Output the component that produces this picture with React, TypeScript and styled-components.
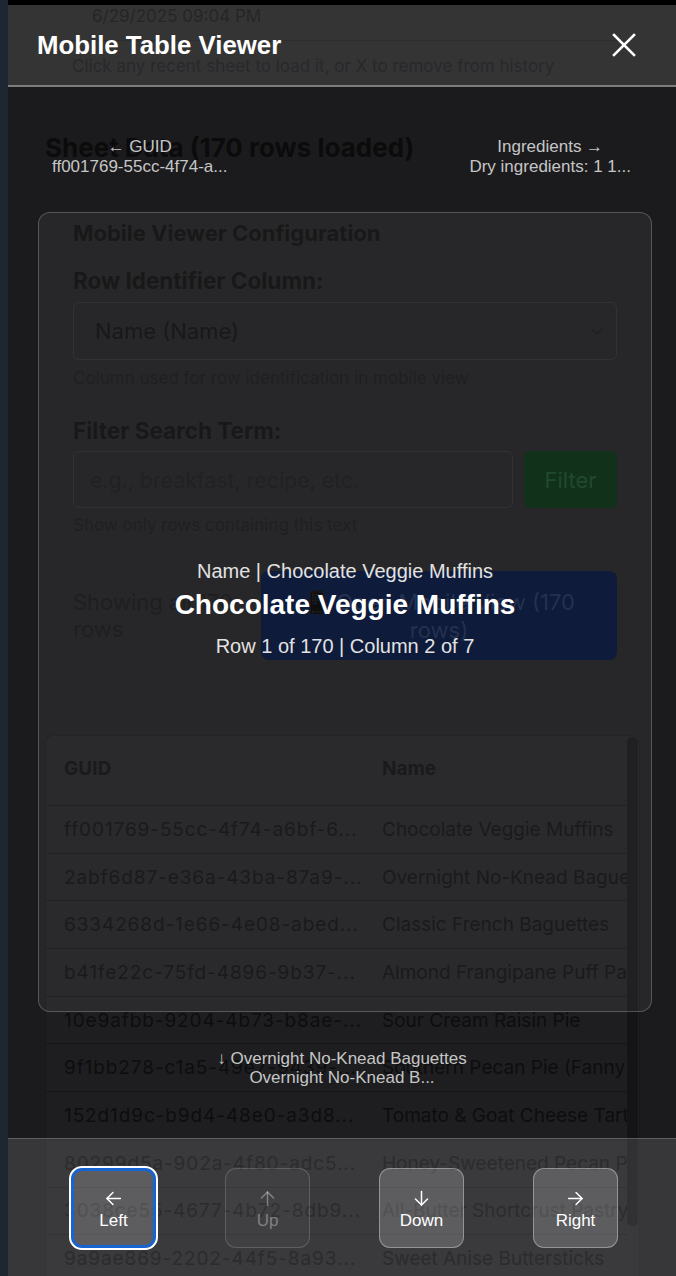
import React from 'react';
import styled, { createGlobalStyle, css } from 'styled-components';

const Global = createGlobalStyle`
  html, body { margin: 0; padding: 0; background: #1b1b1d; }
  body { width: 676px; height: 1276px; overflow: hidden; }
  * { box-sizing: border-box; }
`;

const Shell = styled.div`
  display: flex;
  width: 676px;
  height: 1276px;
  overflow: hidden;
  background: #1b1b1d;
`;

const EdgeStrip = styled.div`
  flex: none;
  width: 8px;
  background: #1e2631;
`;

const Viewport = styled.div`
  position: relative;
  flex: 1;
  overflow: hidden;
  background: #1b1b1d;
`;

/* ---------- underlying page (dimmed) ---------- */

const Page = styled.div`
  font-family: Inter, Roboto, "Liberation Sans", sans-serif;
  color: #0b0b0c;
  border-top: 5px solid #000;
`;

const RecentSection = styled.section`
  padding-left: 49px;
  padding-right: 48px;
`;

const RecentItem = styled.div`
  height: 36px;
  padding-left: 35px;
  border-bottom: 1px solid #141416;
  font-size: 17px;
  line-height: 22px;
`;

const RecentHint = styled.p`
  margin: 15px 0 0 15px;
  font-size: 17px;
  line-height: 20px;
  color: #0e0e10;
`;

const SheetTitle = styled.h2`
  margin: 55px 0 0 37px;
  font-size: 26px;
  line-height: 34px;
  font-weight: 700;
`;

const ConfigSection = styled.section`
  margin: 53px 31px 0 37px;
  padding: 0 28px;
`;

const ConfigHeading = styled.h3`
  margin: 0;
  font-size: 22px;
  line-height: 30px;
  font-weight: 700;
`;

const FieldLabel = styled.label<{ $gap: number }>`
  display: block;
  margin-top: ${(p) => p.$gap}px;
  font-size: 22.5px;
  line-height: 30px;
  font-weight: 700;
`;

const SelectBox = styled.div`
  display: flex;
  align-items: center;
  justify-content: space-between;
  height: 58px;
  margin-top: 6px;
  padding: 0 12px 0 21px;
  border: 1px solid #27272a;
  border-radius: 6px;
  font-size: 22px;
`;

const Help = styled.p<{ $gap: number }>`
  margin: ${(p) => p.$gap}px 0 0;
  font-size: 17px;
  line-height: 22px;
  color: #131315;
`;

const FilterRow = styled.div`
  display: flex;
  gap: 11px;
  margin-top: 5px;
  height: 57px;
`;

const TextInput = styled.div`
  flex: 1;
  display: flex;
  align-items: center;
  padding-left: 16px;
  border: 1px solid #27272a;
  border-radius: 6px;
  font-size: 21.3px;
  color: #151517;
`;

const FilterButton = styled.div`
  width: 93px;
  display: flex;
  align-items: center;
  justify-content: center;
  border-radius: 6px;
  background: #04260e;
  color: #134022;
  font-size: 22px;
`;

const ShowingRow = styled.div`
  display: flex;
  align-items: stretch;
  margin-top: 35px;
  height: 89px;
`;

const ShowingText = styled.div`
  flex: 1;
  padding-top: 18px;
  font-size: 22px;
  line-height: 27px;
  color: #121214;
`;

const OpenButton = styled.div`
  width: 356px;
  display: flex;
  align-items: center;
  justify-content: center;
  text-align: center;
  padding: 0 30px;
  border-radius: 8px;
  background: #000e30;
  color: #182645;
  font-size: 22px;
  line-height: 28px;
`;

const Emoji = styled.span`
  filter: brightness(0.12);
`;

const TableWrap = styled.div`
  position: relative;
  margin: 75px 36px 0 37px;
  height: 620px;
  border: 1px solid #18181a;
  border-radius: 8px;
  background: #1e1e20;
  overflow: hidden;
`;

const TableInner = styled.div`
  width: 582px;
  overflow: hidden;
`;

const Row = styled.div<{ $head?: boolean }>`
  display: grid;
  grid-template-columns: 318px 1fr;
  height: ${(p) => (p.$head ? 70 : 47.7)}px;
  padding-bottom: ${(p) => (p.$head ? 4 : 0)}px;
  align-items: center;
  border-bottom: 1px solid #161618;
  font-size: 19px;
  font-weight: ${(p) => (p.$head ? 700 : 400)};
  color: #0d0d0f;
`;

const Cell = styled.div<{ $id?: boolean }>`
  padding: 0 0 0 18px;
  white-space: nowrap;
  overflow: hidden;
  letter-spacing: ${(p) => (p.$id ? '0.9px' : 'normal')};
`;

const ScrollThumb = styled.div`
  position: absolute;
  top: 1px;
  right: 1px;
  width: 11px;
  height: 489px;
  border-radius: 6px;
  background: #141416;
`;

/* ---------- overlay viewer ---------- */

const Overlay = styled.div`
  position: absolute;
  inset: 0;
  display: flex;
  flex-direction: column;
  font-family: "Liberation Sans", Arial, sans-serif;
  color: #fff;
`;

const Header = styled.header`
  flex: none;
  margin-top: 5px;
  height: 82px;
  display: flex;
  align-items: center;
  justify-content: space-between;
  padding: 0 40px 0 29px;
  background: rgba(255, 255, 255, 0.11);
  border-bottom: 2px solid rgba(255, 255, 255, 0.36);
`;

const Title = styled.h1`
  margin: 0;
  font-size: 25.8px;
  font-weight: 700;
`;

const CloseButton = styled.button`
  border: 0;
  padding: 0;
  background: none;
  display: flex;
  color: #fff;
`;

const Hints = styled.div`
  flex: none;
  height: 125px;
  display: flex;
  align-items: flex-start;
  justify-content: space-between;
  padding: 50px 45px 0 44px;
`;

const Hint = styled.div`
  text-align: center;
  font-size: 17px;
  line-height: 19.5px;
  color: #c6c6c6;
`;

const Card = styled.div`
  flex: none;
  height: 800px;
  margin: 0 24px 0 30px;
  display: flex;
  flex-direction: column;
  align-items: center;
  justify-content: center;
  padding-bottom: 7px;
  border: 1px solid rgba(255, 255, 255, 0.22);
  border-radius: 12px;
  background: rgba(255, 255, 255, 0.055);
  text-align: center;
`;

const CellPath = styled.div`
  font-size: 20px;
  line-height: 24px;
  color: #e2e2e2;
`;

const CellValue = styled.div`
  margin-top: 5px;
  font-size: 28px;
  line-height: 34px;
  font-weight: 700;
  color: #fff;
`;

const CellPos = styled.div`
  margin-top: 12px;
  font-size: 20px;
  line-height: 24px;
  color: #e2e2e2;
`;

const BelowHint = styled.div`
  flex: none;
  height: 126px;
  display: flex;
  align-items: center;
  justify-content: center;
  padding-bottom: 14px;
`;

const NavBar = styled.nav`
  flex: none;
  height: 138px;
  display: flex;
  gap: 69px;
  padding: 29px 0 0 63px;
  background: rgba(255, 255, 255, 0.125);
  border-top: 1px solid rgba(255, 255, 255, 0.2);
`;

const NavButton = styled.button<{ $active?: boolean; $disabled?: boolean }>`
  width: 85px;
  height: 80px;
  display: flex;
  flex-direction: column;
  align-items: center;
  justify-content: center;
  gap: 4px;
  padding: 4px 0 0;
  border-radius: 11px;
  border: 1px solid rgba(255, 255, 255, 0.34);
  background: rgba(255, 255, 255, 0.18);
  color: #fff;
  font-family: "Liberation Sans", Arial, sans-serif;
  font-size: 17px;
  line-height: 20px;
  ${(p) =>
    p.$active &&
    css`
      border: 3px solid #1764d4;
      outline: 2px solid #fff;
      outline-offset: 0;
    `}
  ${(p) =>
    p.$disabled &&
    css`
      background: rgba(255, 255, 255, 0.03);
      border-color: rgba(255, 255, 255, 0.16);
      color: rgba(255, 255, 255, 0.35);
    `}
`;

type Dir = 'left' | 'up' | 'down' | 'right';
const rot: Record<Dir, number> = { left: 0, up: 90, right: 180, down: 270 };

const ArrowIcon = ({ dir }: { dir: Dir }) => (
  <svg
    width="17"
    height="17"
    viewBox="0 0 16 16"
    fill="none"
    stroke="currentColor"
    strokeWidth="1.4"
    strokeLinecap="round"
    strokeLinejoin="round"
    style={{ transform: `rotate(${rot[dir]}deg)` }}
  >
    <path d="M14.5 8H1.8" />
    <path d="M7.5 2.3 1.8 8l5.7 5.7" />
  </svg>
);

const rows: [string, string][] = [
  ['ff001769-55cc-4f74-a6bf-6...', 'Chocolate Veggie Muffins'],
  ['2abf6d87-e36a-43ba-87a9-...', 'Overnight No-Knead Baguettes'],
  ['6334268d-1e66-4e08-abed...', 'Classic French Baguettes'],
  ['b41fe22c-75fd-4896-9b37-...', 'Almond Frangipane Puff Pastry'],
  ['10e9afbb-9204-4b73-b8ae-...', 'Sour Cream Raisin Pie'],
  ['9f1bb278-c1a5-49e7-9439-...', 'Southern Pecan Pie (Fanny'],
  ['152d1d9c-b9d4-48e0-a3d8...', 'Tomato & Goat Cheese Tart'],
  ['80299d5a-902a-4f80-adc5...', 'Honey-Sweetened Pecan Pie'],
  ['3038ce55-4677-4b72-8db9...', 'All-Butter Shortcrust Pastry'],
  ['9a9ae869-2202-44f5-8a93...', 'Sweet Anise Buttersticks'],
];

const CloseIcon = () => (
  <svg width="24" height="24" viewBox="0 0 24 24" fill="none" stroke="currentColor" strokeWidth="2.6" strokeLinecap="square">
    <line x1="2" y1="2" x2="22" y2="22" />
    <line x1="22" y1="2" x2="2" y2="22" />
  </svg>
);

const Chevron = () => (
  <svg width="14" height="14" viewBox="0 0 14 14" fill="none" stroke="#141416" strokeWidth="1.5">
    <polyline points="2,5 7,10 12,5" />
  </svg>
);

export default function App() {
  return (
    <>
      <Global />
      <Shell>
        <EdgeStrip />
        <Viewport>
          <Page>
            <RecentSection>
              <RecentItem>6/29/2025 09:04 PM</RecentItem>
              <RecentHint>Click any recent sheet to load it, or X to remove from history</RecentHint>
            </RecentSection>
            <SheetTitle>Sheet Data (170 rows loaded)</SheetTitle>
            <ConfigSection>
              <ConfigHeading>Mobile Viewer Configuration</ConfigHeading>
              <FieldLabel $gap={18}>Row Identifier Column:</FieldLabel>
              <SelectBox>
                <span>Name (Name)</span>
                <Chevron />
              </SelectBox>
              <Help $gap={7}>Column used for row identification in mobile view</Help>
              <FieldLabel $gap={27}>Filter Search Term:</FieldLabel>
              <FilterRow>
                <TextInput>e.g., breakfast, recipe, etc.</TextInput>
                <FilterButton>Filter</FilterButton>
              </FilterRow>
              <Help $gap={6}>Show only rows containing this text</Help>
              <ShowingRow>
                <ShowingText>Showing all 170 rows</ShowingText>
                <OpenButton>
                  <span>
                    <Emoji>📱</Emoji> Open Mobile View (170 rows)
                  </span>
                </OpenButton>
              </ShowingRow>
            </ConfigSection>
            <TableWrap>
              <TableInner>
                <Row $head>
                  <Cell>GUID</Cell>
                  <Cell>Name</Cell>
                </Row>
                {rows.map(([g, n]) => (
                  <Row key={g}>
                    <Cell $id>{g}</Cell>
                    <Cell>{n}</Cell>
                  </Row>
                ))}
              </TableInner>
              <ScrollThumb />
            </TableWrap>
          </Page>

          <Overlay>
            <Header>
              <Title>Mobile Table Viewer</Title>
              <CloseButton aria-label="Close">
                <CloseIcon />
              </CloseButton>
            </Header>
            <Hints>
              <Hint>
                ← GUID
                <br />
                ff001769-55cc-4f74-a...
              </Hint>
              <Hint>
                Ingredients →
                <br />
                Dry ingredients: 1 1...
              </Hint>
            </Hints>
            <Card>
              <CellPath>Name | Chocolate Veggie Muffins</CellPath>
              <CellValue>Chocolate Veggie Muffins</CellValue>
              <CellPos>Row 1 of 170 | Column 2 of 7</CellPos>
            </Card>
            <BelowHint>
              <Hint>
                ↓ Overnight No-Knead Baguettes
                <br />
                Overnight No-Knead B...
              </Hint>
            </BelowHint>
            <NavBar>
              <NavButton $active>
                <ArrowIcon dir="left" />
                Left
              </NavButton>
              <NavButton $disabled>
                <ArrowIcon dir="up" />
                Up
              </NavButton>
              <NavButton>
                <ArrowIcon dir="down" />
                Down
              </NavButton>
              <NavButton>
                <ArrowIcon dir="right" />
                Right
              </NavButton>
            </NavBar>
          </Overlay>
        </Viewport>
      </Shell>
    </>
  );
}
